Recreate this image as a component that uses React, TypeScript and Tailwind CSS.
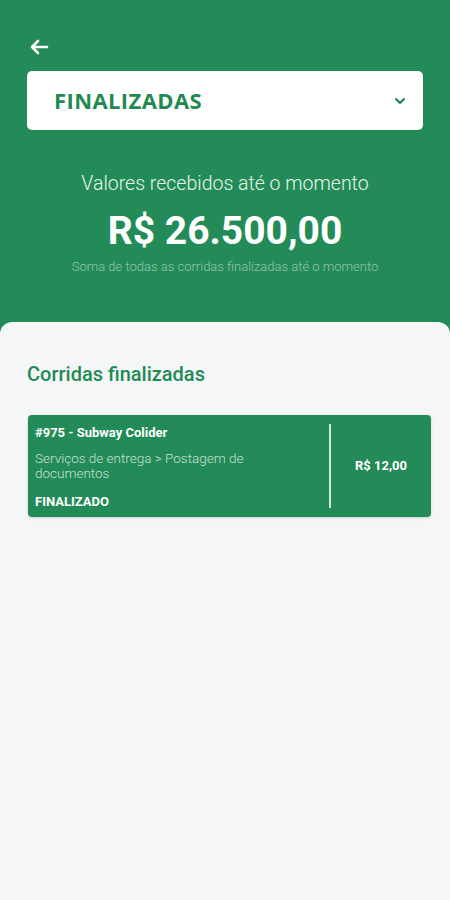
import React from "react";

export default function App() {
  return (
    <div className="w-[450px] h-[900px] bg-[#f5f6f8] flex flex-col" style={{ fontFamily: "Roboto, 'Noto Sans', sans-serif" }}>
      <div className="bg-[#228b57] h-[334px] flex flex-col px-[27px] pt-[37px] shrink-0">
        <button className="w-[24px] h-[20px] flex items-center ml-[2px]">
          <svg width="20" height="16" viewBox="0 0 20 16" fill="none">
            <path d="M18 8H3M9 2L3 8l6 6" stroke="white" strokeWidth="2.6" strokeLinecap="round" strokeLinejoin="round" />
          </svg>
        </button>
        <div className="mt-[14px] h-[59px] bg-white rounded-[5px] flex items-center justify-between pl-[27px] pr-[17px]">
          <span className="text-[22px] font-bold text-[#1f8a53] tracking-[0.4px]" style={{ fontFamily: "'Open Sans', sans-serif" }}>FINALIZADAS</span>
          <svg width="12" height="8" viewBox="0 0 12 8" fill="none">
            <path d="M2 2l4 4 4-4" stroke="#2b7a57" strokeWidth="2" strokeLinecap="round" strokeLinejoin="round" />
          </svg>
        </div>
        <div className="flex flex-col items-center mt-[41px]">
          <div className="text-[19.5px] font-light text-white/90 leading-[26px]">Valores recebidos até o momento</div>
          <div className="text-[39px] font-bold text-white leading-[46px] mt-[11px]">R$ 26.500,00</div>
          <div className="text-[13px] font-light text-white/50 leading-[16px] mt-[5px]">Soma de todas as corridas finalizadas até o momento</div>
        </div>
      </div>
      <div className="-mt-[12px] bg-[#f5f6f8] rounded-t-[12px] flex-1 px-[27px] pt-[39px]">
        <div className="text-[20px] font-medium text-[#1f8a53] leading-[26px]">Corridas finalizadas</div>
        <div className="mt-[28px] ml-[1px] w-[403px] h-[102px] bg-[#228b57] rounded-[4px] shadow-[0_1px_3px_rgba(0,0,0,0.15)] flex">
          <div className="flex-1 flex flex-col pl-[7px] pt-[9px] pb-[7px]">
            <div className="text-[13px] font-bold text-white leading-[17px]">#975 - Subway Colider</div>
            <div className="text-[13.5px] font-light text-white/75 leading-[15px] mt-[10px] w-[250px]">Serviços de entrega &gt; Postagem de documentos</div>
            <div className="text-[13px] font-bold text-white leading-[17px] mt-auto">FINALIZADO</div>
          </div>
          <div className="w-[2px] bg-white/80 my-[9px]"></div>
          <div className="w-[100px] flex items-center justify-center">
            <span className="text-[13px] font-bold text-white">R$ 12,00</span>
          </div>
        </div>
      </div>
    </div>
  );
}
